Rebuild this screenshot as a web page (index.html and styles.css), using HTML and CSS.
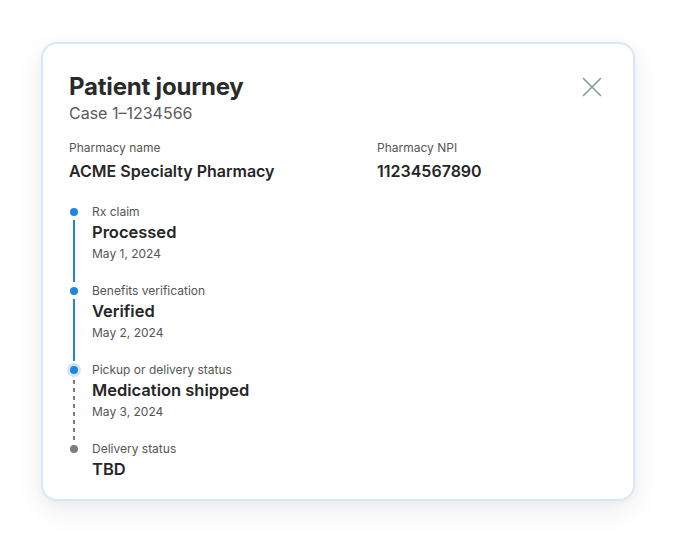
FILE: index.html
```html
<!DOCTYPE html>
<html>
<head>
<meta charset="utf-8">
<link rel="stylesheet" href="styles.css">
</head>
<body>
<div class="page">
  <section class="card">
    <header class="head">
      <div>
        <h1 class="title">Patient journey</h1>
        <div class="case">Case 1–1234566</div>
      </div>
      <button class="close" aria-label="Close">
        <svg width="20" height="20" viewBox="0 0 20 20"><path d="M1.5 1.5L18.5 18.5M18.5 1.5L1.5 18.5" stroke="#8a9896" stroke-width="1.6" fill="none" stroke-linecap="round"/></svg>
      </button>
    </header>
    <div class="info">
      <div class="field">
        <div class="label">Pharmacy name</div>
        <div class="value">ACME Specialty Pharmacy</div>
      </div>
      <div class="field">
        <div class="label">Pharmacy NPI</div>
        <div class="value">11234567890</div>
      </div>
    </div>
    <ol class="timeline">
      <li class="step done">
        <div class="marker"><span class="dot"></span><span class="line"></span></div>
        <div class="content">
          <div class="label">Rx claim</div>
          <div class="status">Processed</div>
          <div class="date">May 1, 2024</div>
        </div>
      </li>
      <li class="step done">
        <div class="marker"><span class="dot"></span><span class="line"></span></div>
        <div class="content">
          <div class="label">Benefits verification</div>
          <div class="status">Verified</div>
          <div class="date">May 2, 2024</div>
        </div>
      </li>
      <li class="step current">
        <div class="marker"><span class="dot"></span><span class="line dashed"></span></div>
        <div class="content">
          <div class="label">Pickup or delivery status</div>
          <div class="status">Medication shipped</div>
          <div class="date">May 3, 2024</div>
        </div>
      </li>
      <li class="step pending">
        <div class="marker"><span class="dot"></span></div>
        <div class="content">
          <div class="label">Delivery status</div>
          <div class="status">TBD</div>
        </div>
      </li>
    </ol>
  </section>
</div>
</body>
</html>
```

FILE: styles.css
```css
* { box-sizing: border-box; }
html, body { margin: 0; padding: 0; background: #ffffff; }
body { font-family: Inter, "Noto Sans", sans-serif; color: #262626; }

.page {
  padding: 42px 43px 44px 41px;
}

.card {
  width: 594px;
  height: 459px;
  background: #fff;
  border: 2px solid #d7e8f8;
  border-radius: 16px;
  box-shadow: 0 10px 30px rgba(0,0,0,0.07), 0 2px 8px rgba(0,0,0,0.04);
  padding: 27px 26px 0 26px;
}

.head {
  display: flex;
  justify-content: space-between;
  align-items: flex-start;
}
.title {
  margin: 0;
  font-size: 24px;
  line-height: 32px;
  font-weight: 700;
  letter-spacing: -0.2px;
  color: #2a2a2a;
}
.case {
  font-size: 16px;
  line-height: 20px;
  color: #5a5a5a;
}
.close {
  border: 0;
  background: none;
  padding: 0;
  margin: 6px 5px 0 0;
  width: 20px;
  height: 20px;
  display: flex;
}

.info {
  display: grid;
  grid-template-columns: 308px 1fr;
  margin-top: 17px;
}
.label {
  font-size: 12px;
  line-height: 16px;
  color: #555;
}
.value {
  font-size: 16px;
  line-height: 22px;
  font-weight: 600;
  color: #262626;
  margin-top: 4px;
}

.timeline {
  list-style: none;
  margin: 22px 0 0 0;
  padding: 0;
}
.step {
  display: flex;
  gap: 13px;
}
.marker {
  width: 10px;
  display: flex;
  flex-direction: column;
  align-items: center;
  padding-top: 4px;
}
.dot {
  width: 8px;
  height: 8px;
  border-radius: 50%;
  background: #1f86e0;
  flex: none;
}
.current .dot {
  box-shadow: 0 0 0 3px #d3e6f8;
}
.pending .dot { background: #7d7d7d; }
.line {
  flex: 1;
  width: 2px;
  background: #1f86e0;
  margin: 4px 0 1px;
}
.line.dashed {
  background: repeating-linear-gradient(to bottom, #7d7d7d 0 4px, transparent 4px 8px);
  margin-top: 6px;
}
.content {
  padding-bottom: 21px;
}
.status {
  font-size: 16.5px;
  line-height: 22px;
  font-weight: 600;
  color: #262626;
  margin-top: 1px;
}
.date {
  font-size: 12px;
  line-height: 16px;
  color: #555;
  margin-top: 3px;
}
.pending .content { padding-bottom: 0; }
```
